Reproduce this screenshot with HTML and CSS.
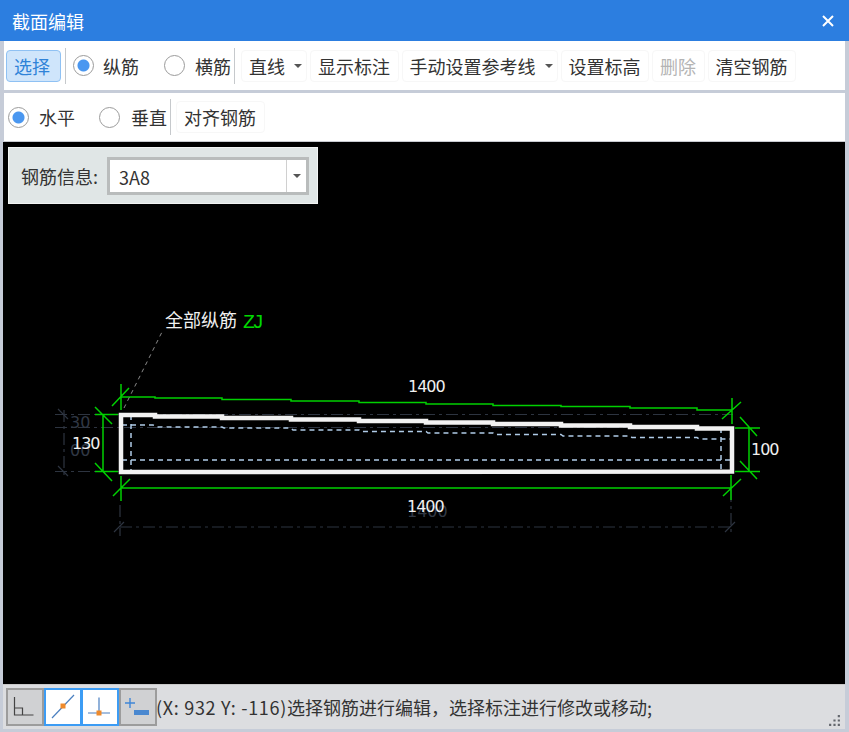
FILE: index.html
```html
<!DOCTYPE html>
<html lang="zh-CN">
<head>
    <meta charset="UTF-8">
    <meta name="viewport" content="width=device-width, initial-scale=1.0">
    <title>截面编辑</title>
    <link rel="stylesheet" href="styles.css">
</head>
<body>
    <div class="window">
        <div class="title-bar">
            <span class="title">截面编辑</span>
            <svg class="close" width="12" height="12" viewBox="0 0 12 12">
                <path d="M1 1 L11 11 M11 1 L1 11" stroke="#fff" stroke-width="2"/>
            </svg>
        </div>

        <div class="content">
            <div class="toolbar toolbar-top">
                <button class="tool selected select-btn">选择</button>
                <span class="sep sep-a"></span>
                <span class="radio on radio-a"></span>
                <span class="radio-label label-a">纵筋</span>
                <span class="radio radio-b"></span>
                <span class="radio-label label-b">横筋</span>
                <span class="sep sep-b"></span>
                <button class="tool drop line-btn">直线<i class="caret"></i></button>
                <button class="tool">显示标注</button>
                <button class="tool drop">手动设置参考线<i class="caret"></i></button>
                <button class="tool">设置标高</button>
                <button class="tool disabled">删除</button>
                <button class="tool">清空钢筋</button>
            </div>

            <div class="toolbar toolbar-second">
                <span class="radio on radio-c"></span>
                <span class="radio-label label-c">水平</span>
                <span class="radio radio-d"></span>
                <span class="radio-label label-b">垂直</span>
                <span class="sep sep-c"></span>
                <button class="tool">对齐钢筋</button>
            </div>

            <div class="canvas">
                <svg class="drawing" width="842" height="542" viewBox="4 142 842 542">
                    <!-- hidden dimension layer -->
                    <g class="dim-dark">
                        <path d="M55 414.5 H733 M55 427.5 H733 M55 471.5 H120 M64 410 V476 M120 505 V536 M731 490 V536 M120 527 H733"/>
                    </g>
                    <g class="dim-tick">
                        <path d="M58 409 L68 419 M58 466 L68 476 M114 532 L124 522 M725 532 L735 522"/>
                    </g>
                    <text class="dim-text" x="70" y="428">30</text>
                    <text class="dim-text" x="70" y="456">00</text>
                    <text class="dim-text" x="407" y="517">1400</text>

                    <!-- stirrup -->
                    <path class="blue-dash" d="M122 425 H153 L157 427 H222 L224 428 H291 L293 430 H359 L361 431.5 H426 L428 433 H493 L495 434.5 H561 L563 436 H630 L632 437.5 H697 L699 439 H731 M122 460 H731 M131 415 V473 M721 428 V473"/>

                    <!-- section outline -->
                    <path class="outline" d="M121 472 V415 H155 V416.5 H222 V418 H291 V419.5 H359 V421 H426 V422.5 H493 V424 H561 V425.5 H630 V427 H697 V428.5 H732 V471.5 Z"/>

                    <!-- green dimensions -->
                    <g class="green">
                        <path d="M121 397 H155 V398 H222 V399.5 H291 V401 H359 V402.5 H426 V404 H493 V405.5 H561 V406.5 H630 V408 H697 V410 H732"/>
                        <path d="M121 384 V410 M112 406 L129 388 M732 398 V424 M722 419 L741 402"/>
                        <path d="M121 488 H732 M121 476 V501 M113 496 L130 479 M731 475 V500 M723 496 L741 479"/>
                        <path d="M103 414 V472 M95 414.5 H118 M95 471.5 H118 M95 407 L112 424 M95 463 L112 481"/>
                        <path d="M749 428 V472 M735 428 H760 M735 471.5 H760 M740 417 L757 436 M740 461 L757 479"/>
                    </g>

                    <path class="leader" d="M124 408 L163 330"/>
                    <text class="note" x="165" y="327">全部纵筋</text>
                    <text class="note-code" x="243" y="328">ZJ</text>
                    <text class="value" x="408" y="392">1400</text>
                    <text class="value" x="407" y="512">1400</text>
                    <text class="value" x="72" y="449">130</text>
                    <text class="value" x="751" y="455">100</text>
                </svg>

                <div class="info-panel">
                    <span class="info-label">钢筋信息:</span>
                    <div class="combo">
                        <span class="combo-value">3A8</span>
                        <span class="combo-arrow"><i class="caret"></i></span>
                    </div>
                </div>
            </div>

            <div class="status-bar">
                <button class="snap">
                    <svg width="26" height="26" viewBox="0 0 26 26">
                        <path d="M2.5 3 V21 H21.5 M2.5 14 H10.5 V21" fill="none" stroke="#444" stroke-width="1.2"/>
                    </svg>
                </button>
                <button class="snap active">
                    <svg width="26" height="26" viewBox="0 0 26 26">
                        <path d="M2 24 L24 1" stroke="#4a7fc0" stroke-width="1.2"/>
                        <rect x="10.5" y="9.5" width="5" height="5" fill="#ee8a2c"/>
                    </svg>
                </button>
                <button class="snap active">
                    <svg width="26" height="26" viewBox="0 0 26 26">
                        <path d="M12 3.5 V19 M1 19 H23" stroke="#4a7fc0" stroke-width="1.2"/>
                        <rect x="9.5" y="16.5" width="5" height="5" fill="#ee8a2c"/>
                    </svg>
                </button>
                <button class="snap">
                    <svg width="26" height="26" viewBox="0 0 26 26">
                        <path d="M5 4 V14 M0 9 H10" stroke="#3f86d8" stroke-width="1.4"/>
                        <rect x="9" y="16" width="15" height="5" fill="#4a88d0"/>
                    </svg>
                </button>
                <span class="status-text"><span class="coords">(X: 932 Y: -116)</span>选择钢筋进行编辑&#xFF0C;选择标注进行修改或移动;</span>
                <svg class="grip" width="13" height="13" viewBox="0 0 12 12">
                    <path d="M9 1 h2 v2 h-2 z M5 5 h2 v2 h-2 z M9 5 h2 v2 h-2 z M1 9 h2 v2 h-2 z M5 9 h2 v2 h-2 z M9 9 h2 v2 h-2 z" fill="#63676d"/>
                </svg>
            </div>
        </div>
    </div>
</body>
</html>
```

FILE: styles.css
```css
* {
    box-sizing: border-box;
}

html, body {
    margin: 0;
    height: 100%;
    overflow: hidden;
}

body {
    font-family: "Noto Sans CJK SC", "Liberation Sans", sans-serif;
    font-size: 18px;
    color: #333;
    background-color: #c6ccd8;
}

.window {
    display: flex;
    flex-direction: column;
    width: 849px;
    height: 732px;
}

.title-bar {
    display: flex;
    align-items: center;
    justify-content: space-between;
    flex: 0 0 41px;
    padding: 0 15px 0 12px;
    background-color: #2c7ee0;
    color: #fff;
}

.content {
    display: flex;
    flex-direction: column;
    flex: 1;
    min-height: 0;
    margin: 0 4px 3px 3px;
}

.toolbar {
    display: flex;
    align-items: center;
    background-color: #fff;
    margin-left: 1px;
}

.toolbar-top {
    flex: 0 0 49px;
    padding-left: 2px;
}

.toolbar-second {
    flex: 0 0 49px;
    margin-top: 3px;
    padding-left: 4px;
    border-bottom: 1px solid #c8cad0;
}

.tool {
    display: inline-flex;
    align-items: center;
    height: 32px;
    margin-right: 3px;
    padding: 0 7.5px 0 7px;
    border: 1px solid #f7f7f7;
    border-radius: 4px;
    background-color: #fff;
    font: inherit;
    color: #333;
    white-space: nowrap;
}

.tool.selected {
    width: 55px;
    background-color: #cfe5fb;
    border-color: #8fc1f3;
    color: #2f83d8;
}

.tool.disabled {
    color: #b4b4b4;
}

.drop {
    padding-right: 4px;
}

.line-btn {
    width: 66px;
}

.caret {
    display: inline-block;
    width: 0;
    height: 0;
    margin-left: 9px;
    border-left: 4px solid transparent;
    border-right: 4px solid transparent;
    border-top: 4px solid #555;
}

.sep {
    width: 1px;
    height: 36px;
    background-color: #c6c9cc;
}

.sep-a { margin: 0 7px 0 1px; }
.sep-b { margin: 0 6px 0 3px; }
.sep-c { margin: 0 5px 0 3px; }

.radio {
    flex: none;
    width: 21px;
    height: 21px;
    border: 1.5px solid #9b9b9b;
    border-radius: 50%;
    background-color: #fff;
}

.radio.on {
    background: radial-gradient(circle, #4a97f0 0 5.5px, #fff 6.5px);
}

.radio-a { margin-right: 9px; }
.radio-b { margin-right: 10px; }
.radio-c { margin-right: 10px; }
.radio-d { margin-right: 11px; }

.radio-label {
    white-space: nowrap;
}

.label-a { margin-right: 25px; }
.label-c { margin-right: 24px; }

.canvas {
    position: relative;
    flex: 1;
    min-height: 0;
    background-color: #000;
}

.drawing {
    display: block;
    margin-left: 1px;
}

.drawing path {
    fill: none;
}

.dim-dark path {
    stroke: #2d3440;
    stroke-width: 1.2;
    stroke-dasharray: 12 4 3 4;
}

.dim-tick path {
    stroke: #2d3440;
    stroke-width: 1.2;
}

.dim-text {
    font-family: "DejaVu Sans", sans-serif;
    font-size: 16px;
    fill: #303845;
}

.blue-dash {
    stroke: #b0cce8;
    stroke-width: 1.5;
    stroke-dasharray: 5 4;
}

.outline {
    stroke: #f2f2f2;
    stroke-width: 4.5;
}

.green path {
    stroke: #00d000;
    stroke-width: 1.5;
}

.leader {
    stroke: #8a8a8a;
    stroke-width: 1;
    stroke-dasharray: 4 4;
}

.note {
    font-size: 18px;
    fill: #f0f0f0;
}

.note-code {
    font-family: "Liberation Mono", monospace;
    font-size: 20px;
    letter-spacing: -3px;
    fill: #00d800;
}

.value {
    font-family: "DejaVu Sans", sans-serif;
    font-size: 16px;
    letter-spacing: -1px;
    fill: #f0f0f0;
}

.info-panel {
    position: absolute;
    left: 5px;
    top: 5px;
    display: flex;
    align-items: center;
    width: 310px;
    height: 57px;
    padding-left: 12px;
    background-color: #e0e6e6;
    border: 1px solid #f2f4f4;
}

.info-label {
    margin-right: 9px;
    white-space: nowrap;
}

.combo {
    display: flex;
    width: 202px;
    height: 38px;
    border: 3px solid #b9bcbc;
    background-color: #fff;
}

.combo-value {
    flex: 1;
    padding-left: 9px;
    line-height: 34px;
}

.combo-arrow {
    display: flex;
    align-items: center;
    justify-content: center;
    width: 20px;
    border-left: 1px solid #d0d0d0;
}

.combo-arrow .caret {
    margin: 0;
}

.status-bar {
    position: relative;
    display: flex;
    align-items: center;
    flex: 0 0 45px;
    padding-left: 3px;
    background-color: #dcdde0;
    border-top: 1px solid #c8c8c8;
}

.snap {
    display: flex;
    flex: none;
    align-items: center;
    justify-content: center;
    width: 38px;
    height: 38px;
    margin-right: -0.5px;
    padding: 0;
    border: 2px solid #9c9c9c;
    background-color: #d0d1d3;
}

.snap.active {
    border-color: #3c9cf4;
    background-color: #fff;
}

.status-text {
    white-space: nowrap;
}

.coords {
    letter-spacing: 0.7px;
}

.grip {
    position: absolute;
    right: 4px;
    bottom: 2px;
}
```
